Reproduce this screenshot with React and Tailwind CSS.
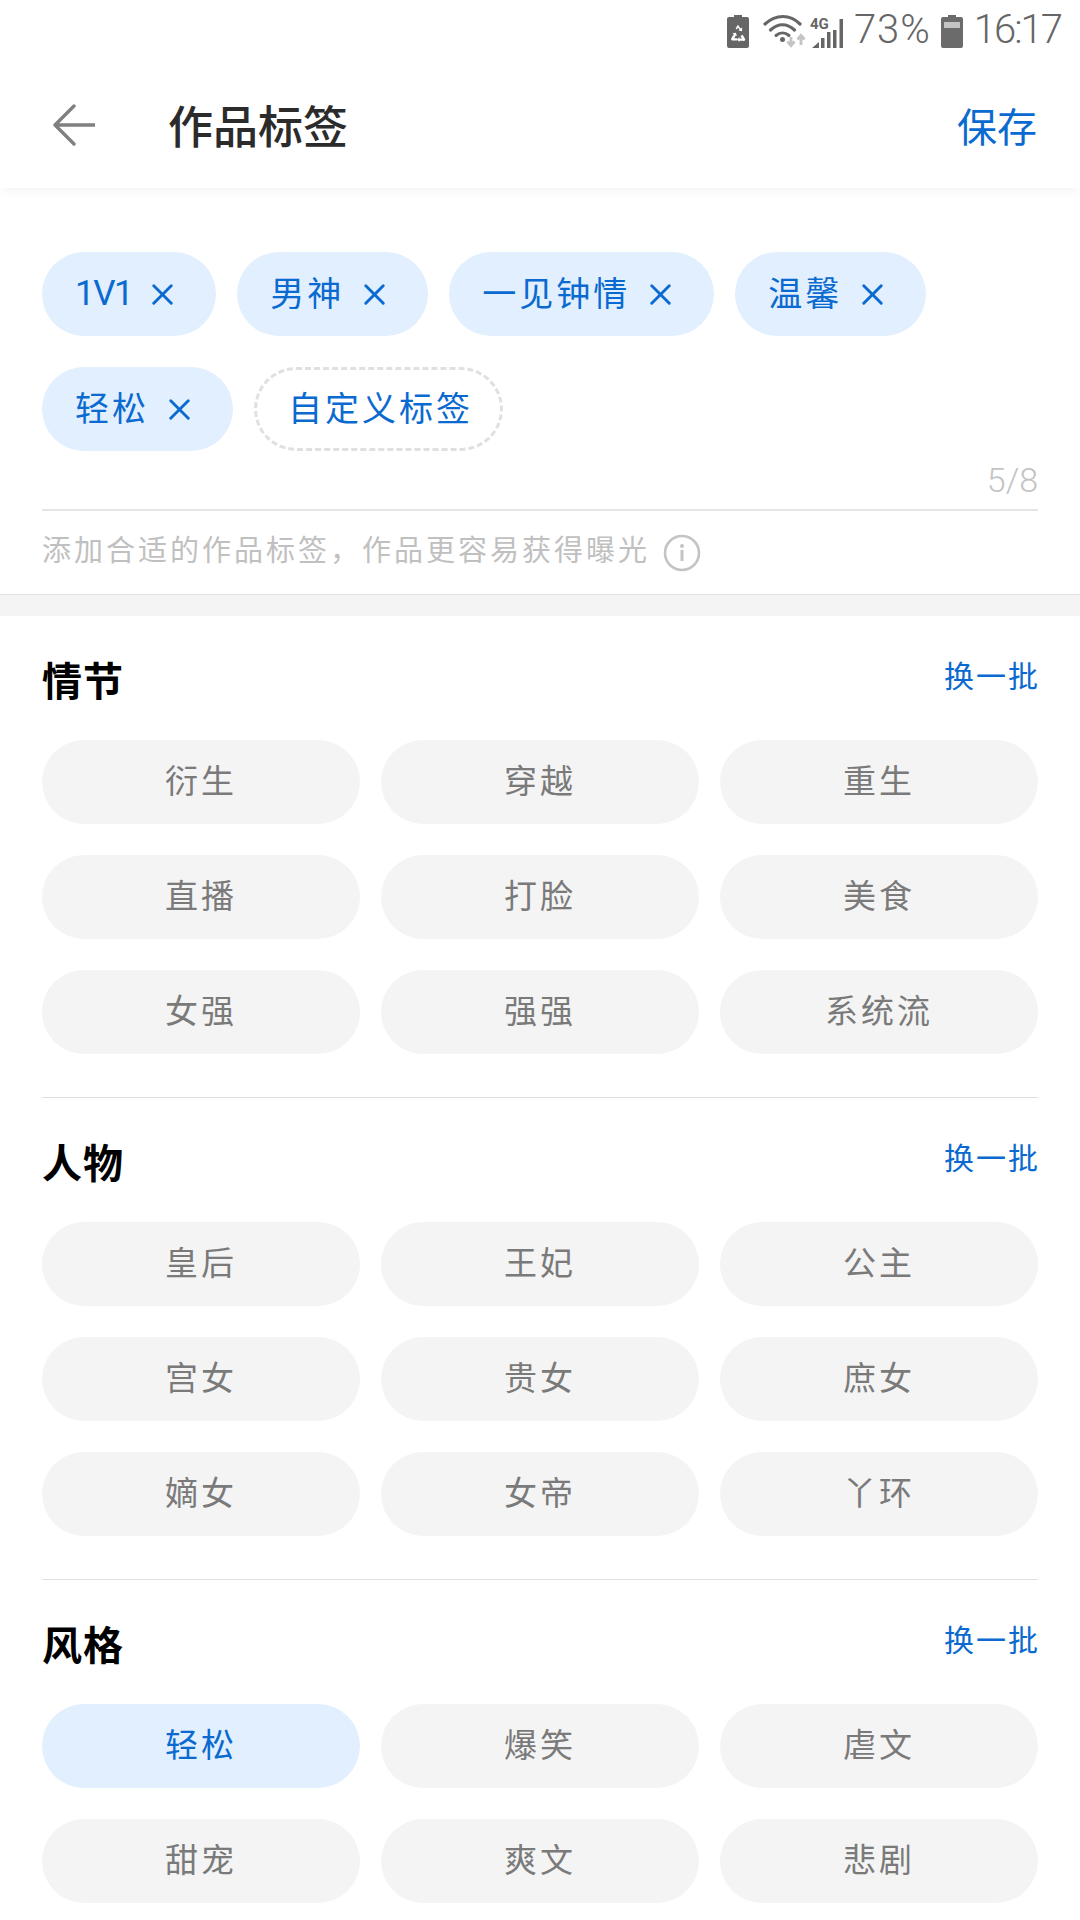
import { X } from 'lucide-react'

const CJK = '"Noto Sans CJK SC", sans-serif'

function RecycleBattery() {
  return (
    <svg width="22" height="33" viewBox="0 0 22 33" className="mr-[14px] mt-[2px]">
      <path d="M7 0h8v2h5a2 2 0 0 1 2 2v27a2 2 0 0 1-2 2H2a2 2 0 0 1-2-2V4a2 2 0 0 1 2-2h5z" fill="#666" />
      <path d="M8.600 13.500l2.400-3.800 2.400 3.800 1.800-1-.2 3.800-3.500-.8 1-.7-1.500-2.300-1.300 2.100zM4.500 23l2.300-3.800-1.500-1 3.500-.4 1.200 3.300-1.200-.5-1.600 2.700h3v2.200H6a1.500 1.500 0 0 1-1.500-2.500zM17.500 23l-1.900-3.200-2.100 1.200 1.400 2.400H12.500v-1.300L10 24.500l2.500 2.400v-1.200H16a1.500 1.500 0 0 0 1.500-2.700z" fill="#fff" />
    </svg>
  )
}

function Wifi() {
  return (
    <svg width="44" height="34" viewBox="0 0 44 34" className="mr-[3px] mt-[2px]">
      <path d="M2 10C13 0 27 0 37 10" fill="none" stroke="#666" strokeWidth="3.200" strokeLinecap="round" />
      <path d="M7.500 16C15 9 24 9 31.500 16" fill="none" stroke="#666" strokeWidth="3.200" strokeLinecap="round" />
      <path d="M13 21.500C17 18 22 18 26 21.500" fill="none" stroke="#666" strokeWidth="3" strokeLinecap="round" />
      <circle cx="19.500" cy="25.500" r="2.500" fill="#666" />
      <path d="M28 23v8m-3.500-3.500l3.500 4 3.500-4" fill="none" stroke="#c4c4c4" strokeWidth="2.800" />
      <path d="M38 31v-9m-3.500 3.500L38 21.500l3.500 4" fill="none" stroke="#c4c4c4" strokeWidth="2.800" />
    </svg>
  )
}

function Signal() {
  return (
    <svg width="34" height="33" viewBox="0 0 34 33" className="mr-[10px] mt-[2px]">
      <text x="0" y="14" fontSize="15" fontWeight="700" fill="#666" fontFamily="Roboto, sans-serif">4G</text>
      <path d="M2 33l7-6v6zM11 33v-10h3.500v10zM17 33V17h3.500v16zM23 33V15h3.500v18zM29.500 33V4H33v29z" fill="#666" />
    </svg>
  )
}

function Battery() {
  return (
    <svg width="22" height="33" viewBox="0 0 22 33" className="ml-[10px] mr-[11px] mt-[2px]">
      <path d="M7 0h8v2h5a2 2 0 0 1 2 2v27a2 2 0 0 1-2 2H2a2 2 0 0 1-2-2V4a2 2 0 0 1 2-2h5z" fill="#6b6b6b" />
      <rect x="3" y="7" width="16" height="6" fill="#c4c4c4" />
    </svg>
  )
}

function StatusBar() {
  return (
    <div className="h-[60px] flex items-center justify-end pr-[19px] text-[#666]" style={{ fontFamily: 'Roboto, sans-serif' }}>
      <RecycleBattery />
      <Wifi />
      <Signal />
      <span className="text-[40px] tracking-[1px] font-light leading-none">73%</span>
      <Battery />
      <span className="text-[40px] tracking-[-2px] font-light leading-none">16:17</span>
    </div>
  )
}

function Header() {
  return (
    <div className="h-[128px] flex items-center pl-[53px] pr-[43px] pt-[2px] shadow-[0_6px_10px_-4px_rgba(0,0,0,0.06)]">
      <svg width="42" height="42" viewBox="0 0 42 42" className="mr-[73px]">
        <path d="M21 2L2 21l19 19M2 21h40" fill="none" stroke="#808080" strokeWidth="3.400" strokeLinecap="round" strokeLinejoin="round" />
      </svg>
      <div className="flex-1 text-[45px] font-medium text-[#2b2b2b]">作品标签</div>
      <div className="text-[40px] text-[#0a6ad0]">保存</div>
    </div>
  )
}

function SelectedTag({ label, latin }) {
  return (
    <div className="h-[84px] rounded-full bg-[#e1effe] text-[#0a6ad0] flex items-center pl-[33px] pr-[36px]">
      {latin
        ? <span className="text-[35px] tracking-[-1.500px] mr-[13px]" style={{ fontFamily: 'Roboto, sans-serif' }}>{label}</span>
        : <span className="text-[34px] tracking-[3px] mr-[13px] pb-[6px]">{label}</span>}
      <X size={35} strokeWidth={2} />
    </div>
  )
}

function TopPanel() {
  return (
    <div className="pt-[64px] border-b border-[#e0e0e0]">
      <div className="mx-[42px]">
        <div className="flex flex-wrap gap-x-[21px] gap-y-[31px]">
          <SelectedTag label="1V1" latin />
          <SelectedTag label="男神" />
          <SelectedTag label="一见钟情" />
          <SelectedTag label="温馨" />
          <SelectedTag label="轻松" />
          <div className="h-[84px] rounded-full border-[3px] border-dashed border-[#e0e0e0] text-[#0a6ad0] flex items-center pl-[31px] pr-[27px] pb-[6px] text-[34px] tracking-[3px]">自定义标签</div>
        </div>
        <div className="h-[58px] flex items-end justify-end text-[34px] leading-none text-[#c4c4c4] font-light pb-[12px]" style={{ fontFamily: 'Roboto, sans-serif' }}>5/8</div>
        <div className="border-t-2 border-[#e5e5e5] h-[85px] flex items-center">
          <span className="text-[29px] tracking-[3px] text-[#c0c0c0] pb-[8px]">添加合适的作品标签，作品更容易获得曝光</span>
          <svg width="38" height="38" viewBox="0 0 38 38" className="ml-[13px]">
            <circle cx="19" cy="19" r="17" fill="none" stroke="#c4c4c4" strokeWidth="2.600" />
            <circle cx="19" cy="12" r="2" fill="#c4c4c4" />
            <rect x="17.500" y="16" width="3" height="11" fill="#c4c4c4" />
          </svg>
        </div>
      </div>
    </div>
  )
}

function Chip({ label, active }) {
  return (
    <div className={active
      ? 'h-[84px] rounded-full bg-[#e1effe] text-[#0a6ad0] flex items-center justify-center pb-[4px] text-[33px] tracking-[3px]'
      : 'h-[84px] rounded-full bg-[#f4f4f4] text-[#7a7a7a] flex items-center justify-center pb-[4px] text-[33px] tracking-[3px]'}>
      {label}
    </div>
  )
}

function Section({ title, tags, active, last }) {
  return (
    <div className={last ? 'mx-[42px] pt-[36px]' : 'mx-[42px] pt-[36px] pb-[43px] border-b border-[#e0e0e0]'}>
      <div className="flex justify-between h-[88px]">
        <div className="text-[40px] font-bold text-black tracking-[1px] leading-[54px]">{title}</div>
        <div className="text-[30px] text-[#0a6ad0] tracking-[2px] leading-[44px] mr-[-2px]">换一批</div>
      </div>
      <div className="grid grid-cols-3 gap-x-[21px] gap-y-[31px]">
        {tags.map((t) => <Chip key={t} label={t} active={t === active} />)}
      </div>
    </div>
  )
}

export default function App() {
  return (
    <div className="w-[1080px] h-[1920px] overflow-hidden bg-white flex flex-col" style={{ fontFamily: CJK }}>
      <StatusBar />
      <Header />
      <TopPanel />
      <div className="h-[21px] shrink-0 bg-[#f4f4f4]" />
      <Section title="情节" tags={['衍生', '穿越', '重生', '直播', '打脸', '美食', '女强', '强强', '系统流']} />
      <Section title="人物" tags={['皇后', '王妃', '公主', '宫女', '贵女', '庶女', '嫡女', '女帝', '丫环']} />
      <Section title="风格" tags={['轻松', '爆笑', '虐文', '甜宠', '爽文', '悲剧']} active="轻松" last />
    </div>
  )
}
